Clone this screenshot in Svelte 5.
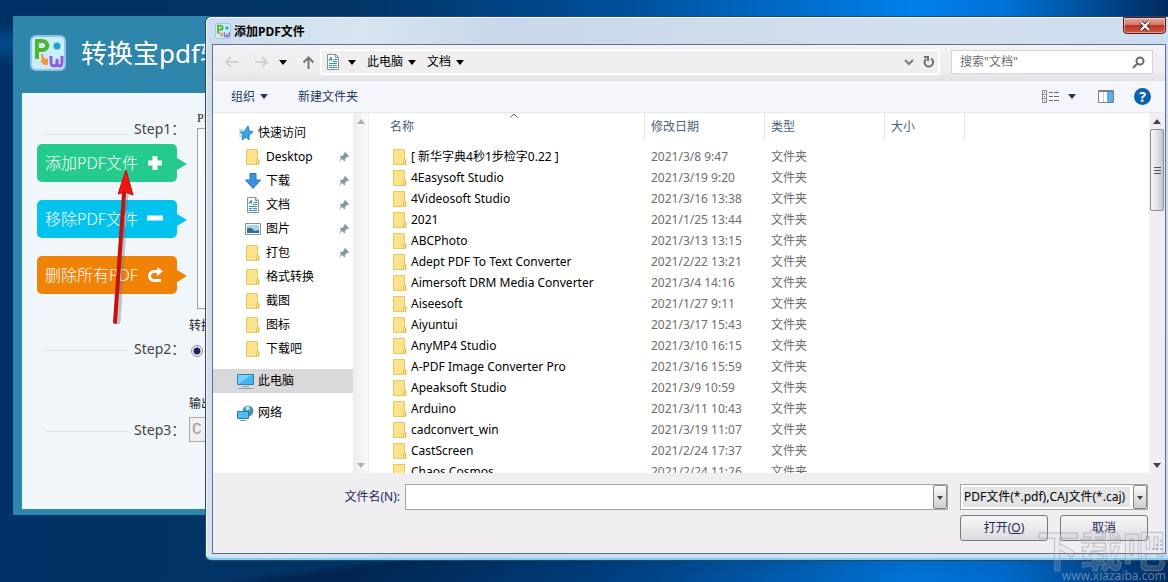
<script lang="ts">
  type Place = { name: string; icon: string; pinned?: boolean };

  const places: Place[] = [
    { name: 'Desktop', icon: 'folder', pinned: true },
    { name: '下载', icon: 'down', pinned: true },
    { name: '文档', icon: 'doc', pinned: true },
    { name: '图片', icon: 'picture', pinned: true },
    { name: '打包', icon: 'folder', pinned: true },
    { name: '格式转换', icon: 'folder' },
    { name: '截图', icon: 'folder' },
    { name: '图标', icon: 'folder' },
    { name: '下载吧', icon: 'folder' }
  ];

  const files = [
    ['[ 新华字典4秒1步检字0.22 ]', '2021/3/8 9:47'],
    ['4Easysoft Studio', '2021/3/19 9:20'],
    ['4Videosoft Studio', '2021/3/16 13:38'],
    ['2021', '2021/1/25 13:44'],
    ['ABCPhoto', '2021/3/13 13:15'],
    ['Adept PDF To Text Converter', '2021/2/22 13:21'],
    ['Aimersoft DRM Media Converter', '2021/3/4 14:16'],
    ['Aiseesoft', '2021/1/27 9:11'],
    ['Aiyuntui', '2021/3/17 15:43'],
    ['AnyMP4 Studio', '2021/3/10 16:15'],
    ['A-PDF Image Converter Pro', '2021/3/16 15:59'],
    ['Apeaksoft Studio', '2021/3/9 10:59'],
    ['Arduino', '2021/3/11 10:43'],
    ['cadconvert_win', '2021/3/19 11:07'],
    ['CastScreen', '2021/2/24 17:37'],
    ['Chaos Cosmos', '2021/2/24 11:26']
  ];

  let fileName = $state('');
  let query = $state('');
</script>

{#snippet folder()}
  <svg class="ico" width="14" height="16" viewBox="0 0 14 16">
    <path d="M.5.5h11v10h1.5v5H.5z" fill="#fde28c" stroke="#e6c667" />
    <path d="M10.5 15.5v-4l1-1 1 1v4" fill="#fbe9a8" stroke="#dfba4d" />
  </svg>
{/snippet}

{#snippet doc()}
  <svg class="ico" width="14" height="16" viewBox="0 0 14 16">
    <path d="M1.5.5h8l3 3v12h-11z" fill="#fff" stroke="#85929c" />
    <path d="M9.5.5v3h3" fill="none" stroke="#85929c" />
    <path d="M3 7l2-4 1 4M3 5.5h3M7.5 5.5h4M7 7.5h4M3 9.5h8M3 11.5h3M7 11.5h4M3 13.5h8" fill="none" stroke="#2f8fbf" />
  </svg>
{/snippet}

{#snippet caret()}
  <svg class="caret" width="8" height="5" viewBox="0 0 8 5"><path d="M0 0h8L4 5z" fill="currentColor" /></svg>
{/snippet}

{#snippet logo(size: number)}
  <svg class="ico" width={size} height={size} viewBox="0 0 36 36">
    <rect x="1" y="1" width="34" height="34" rx="5" fill="#c9edfb" stroke="#8fc5e2" stroke-width="2" />
    <path d="M7 24V6h5c7 0 7 9 0 9H9" fill="none" stroke="#4fb52c" stroke-width="4" />
    <circle cx="27" cy="11" r="3.5" fill="#16a5cf" />
    <path d="M11 19l2 0 1 4 4 1 0 6-4 0-4-4 2-1z" fill="#f2963e" />
    <path d="M21 21v6q0 4 3 4 3 0 3-4v-3 3q0 4 3 4 2 0 2-4v-6" fill="none" stroke="#8c62d8" stroke-width="3" />
  </svg>
{/snippet}

<main class="desktop">
  <section class="app">
    <header>
      {@render logo(36)}
      <h1>转换宝pdf转</h1>
    </header>
    <div class="app-body">
      <div class="steps">
        <div class="step"><i></i><span>Step1：</span></div>
        <button class="action add" type="button">
          添加PDF文件
          <svg width="16" height="16" viewBox="0 0 16 16"><path d="M8 1v14M1 8h14" stroke="#fff" stroke-width="5" /></svg>
        </button>
        <button class="action remove" type="button">
          移除PDF文件
          <svg width="16" height="16" viewBox="0 0 16 16"><path d="M0 7h16" stroke="#fff" stroke-width="5" /></svg>
        </button>
        <button class="action clear" type="button">
          删除所有PDF
          <svg width="16" height="16" viewBox="0 0 16 16">
            <path d="M14 13.5H7C1 13.500 1 4.500 7 4.500h4" fill="none" stroke="#fff" stroke-width="3" />
            <path d="M10 0l6 4.500-6 4.500z" fill="#fff" />
          </svg>
        </button>
        <div class="step second"><i></i><span>Step2：</span></div>
        <div class="step third"><i></i><span>Step3：</span></div>
      </div>
      <div class="settings">
        <p class="inset serif">PDF</p>
        <div class="queue"></div>
        <p>转换</p>
        <input type="radio" aria-label="转换" checked />
        <label for="output">输出</label>
        <input id="output" class="path" type="text" value="C:" />
      </div>
    </div>
    <svg class="pointer" width="30" height="160" viewBox="0 0 30 160">
      <path d="M7 153L15 24" stroke="#777" stroke-opacity=".4" stroke-width="5" stroke-linecap="round" />
      <path d="M4 153L13 24" stroke="#c5120f" stroke-width="4" stroke-linecap="round" />
      <path d="M15 1l7 25-8-3-7 2z" fill="#ee1512" stroke="#c0110e" />
    </svg>
  </section>

  <section class="dialog" aria-label="添加PDF文件">
    <div class="titlebar">
      {@render logo(16)}
      <h2>添加PDF文件</h2>
      <button class="close" type="button" aria-label="关闭">
        <svg width="12" height="10" viewBox="0 0 12 10">
          <path d="M2 1l8 8M10 1L2 9" stroke="#5a3030" stroke-width="4" />
          <path d="M2 1l8 8M10 1L2 9" stroke="#fff" stroke-width="2" />
        </svg>
      </button>
    </div>

    <div class="client">
      <div class="navbar">
        <div class="history">
          <button type="button" aria-label="后退">
            <svg width="13" height="12" viewBox="0 0 13 12"><path d="M6 1L1 6l5 5M1 6h12" fill="none" stroke="#d3d1d5" stroke-width="2" /></svg>
          </button>
          <button type="button" aria-label="前进">
            <svg width="13" height="12" viewBox="0 0 13 12"><path d="M7 1l5 5-5 5M12 6H0" fill="none" stroke="#d3d1d5" stroke-width="2" /></svg>
          </button>
          <button type="button" aria-label="最近位置">{@render caret()}</button>
          <button type="button" aria-label="上移">
            <svg width="13" height="13" viewBox="0 0 13 13"><path d="M1.5 6.5l5-5 5 5M6.5 1.5V13" fill="none" stroke="#777" stroke-width="2" /></svg>
          </button>
        </div>
        <div class="address">
          {@render doc()}
          <button class="crumb" type="button" aria-label="位置">{@render caret()}</button>
          <button class="crumb" type="button">此电脑 {@render caret()}</button>
          <button class="crumb" type="button">文档 {@render caret()}</button>
          <button class="tail" type="button" aria-label="展开">
            <svg width="10" height="7" viewBox="0 0 10 7"><path d="M1 1l4 4 4-4" fill="none" stroke="#7c7c80" stroke-width="2" /></svg>
          </button>
          <button type="button" aria-label="刷新">
            <svg width="12" height="12" viewBox="0 0 12 12">
              <path d="M8 2.5A4.3 4.300 0 1 1 3 3" fill="none" stroke="#707074" stroke-width="2" />
              <path d="M1 0h5v5H4V2H1z" fill="#707074" />
            </svg>
          </button>
        </div>
        <div class="search">
          <input type="text" placeholder={'搜索"文档"'} aria-label="搜索" bind:value={query} />
          <svg width="13" height="13" viewBox="0 0 13 13">
            <circle cx="8" cy="5" r="3.5" fill="none" stroke="#6a6a6e" stroke-width="2" />
            <path d="M5.5 7.5L1 12" stroke="#6a6a6e" stroke-width="2" />
          </svg>
        </div>
      </div>

      <div class="toolbar">
        <button type="button">组织 {@render caret()}</button>
        <button type="button">新建文件夹</button>
        <button class="view" type="button" aria-label="更改视图">
          <svg width="17" height="13" viewBox="0 0 17 13">
            <path d="M.5.5h4v12h-4zM.5 4.5h4M.5 8.5h4" fill="#fff" stroke="#858a92" />
            <path d="M2 2.5h1M2 6.5h1M2 10.5h1M7 2.5h4M12 2.5h5M7 6.5h4M12 6.5h5M7 10.5h4M12 10.5h5" stroke="#666b75" />
          </svg>
          {@render caret()}
        </button>
        <button type="button" aria-label="预览窗格">
          <svg width="16" height="13" viewBox="0 0 16 13">
            <path d="M.5.5h15v12H.5z" fill="#fff" stroke="#77818c" />
            <path d="M1 1.5h14" stroke="#77818c" />
            <path d="M9 2h6v10H9z" fill="#5caee6" />
            <path d="M5.5 2v10" stroke="#c5ccd3" />
          </svg>
        </button>
        <button class="help" type="button" aria-label="帮助">?</button>
      </div>

      <div class="browser">
        <nav>
          <a href="#quick" class="root">
            <svg class="ico" width="14" height="14" viewBox="0 0 14 14">
              <path d="M9 0l1 5 4 1-4 3v5L7 11l-4 3 1-5-3-3h4z" fill="#37a5e4" stroke="#2581bd" />
              <path d="M0 4h4M0 7h3M0 10h3" stroke="#58b7ea" />
            </svg>
            快速访问
          </a>
          {#each places as place}
            <a href="#place">
              <span class="slot">
                {#if place.icon === 'folder'}
                  {@render folder()}
                {:else if place.icon === 'doc'}
                  {@render doc()}
                {:else if place.icon === 'down'}
                  <svg class="ico" width="16" height="16" viewBox="0 0 16 16"><path d="M5 .5h6V7h4.5L8 15.5.5 7H5z" fill="#3b93e0" stroke="#2877bd" /></svg>
                {:else}
                  <svg class="ico" width="16" height="12" viewBox="0 0 16 12">
                    <path d="M.5.5h15v11H.5z" fill="#fff" stroke="#84909b" />
                    <path d="M2 2h12v8H2z" fill="#a4d3ee" />
                    <path d="M2 5l4 0 4 3 4-1v3H2z" fill="#396c86" />
                  </svg>
                {/if}
              </span>
              {place.name}
              {#if place.pinned}
                <svg class="pin" width="10" height="10" viewBox="0 0 10 10">
                  <path d="M6 0l4 4-1 1H8L6 7v2H5L3 7 0 10l2-4-1-1V4h2l2-2V1z" fill="#8b979f" />
                </svg>
              {/if}
            </a>
          {/each}
          <a href="#pc" class="root gap selected">
            <svg class="ico" width="17" height="16" viewBox="0 0 17 16">
              <path d="M.5 1.5h16v10H.5z" fill="#46b4f5" stroke="#327fae" />
              <path d="M1 11L15 2H1z" fill="#7bd0fc" />
              <path d="M5 13.5h7M1 15.5h15" stroke="#85a0b3" />
            </svg>
            此电脑
          </a>
          <a href="#net" class="root later">
            <svg class="ico" width="17" height="16" viewBox="0 0 17 16">
              <circle cx="11" cy="6" r="5.5" fill="#4d93b9" />
              <path d="M8 2l4-1 1 3-3 2z" fill="#bce2ee" />
              <path d="M.5 6.5h11v7H.5z" fill="#51bdf3" stroke="#2b78a8" />
              <path d="M3 15.5h6" stroke="#7898ab" />
            </svg>
            网络
          </a>
        </nav>
        <div class="scroll left">
          <svg width="8" height="5" viewBox="0 0 8 5"><path d="M0 5h8L4 0z" fill="#b0b0b4" /></svg>
          <svg width="8" height="5" viewBox="0 0 8 5"><path d="M0 0h8L4 5z" fill="#b0b0b4" /></svg>
        </div>
        <div class="list">
          <table>
            <thead>
              <tr>
                <th class="name">名称 <svg class="sort" width="8" height="5" viewBox="0 0 8 5"><path d="M.5 4.5L4 1l3.5 3.5" fill="none" stroke="#666" /></svg></th>
                <th class="date">修改日期</th>
                <th class="kind">类型</th>
                <th class="size">大小</th>
                <th class="rest" aria-label="空"></th>
              </tr>
            </thead>
            <tbody>
              {#each files as [name, date]}
                <tr>
                  <td><span class="file">{@render folder()}{name}</span></td>
                  <td>{date}</td>
                  <td>文件夹</td>
                  <td></td>
                  <td></td>
                </tr>
              {/each}
            </tbody>
          </table>
        </div>
        <div class="scroll right">
          <svg width="8" height="5" viewBox="0 0 8 5"><path d="M0 5h8L4 0z" fill="#444" /></svg>
          <div class="thumb"><i></i><i></i><i></i></div>
          <svg width="8" height="5" viewBox="0 0 8 5"><path d="M0 0h8L4 5z" fill="#444" /></svg>
        </div>
      </div>

      <div class="footer">
        <div class="line">
          <label for="file-name">文件名(N):</label>
          <div class="combo">
            <input id="file-name" type="text" bind:value={fileName} />
            <button class="drop" type="button" aria-label="历史"></button>
          </div>
          <div class="combo filter">
            <select aria-label="文件类型">
              <option>PDF文件(*.pdf),CAJ文件(*.caj)</option>
            </select>
            <span class="drop"></span>
          </div>
        </div>
        <div class="line buttons">
          <button type="button">打开(<u>O</u>)</button>
          <button type="button">取消</button>
        </div>
        <svg class="grip" width="12" height="12" viewBox="0 0 12 12">
          <path d="M9 1h2v2H9zM5 5h2v2H5zM9 5h2v2H9zM1 9h2v2H1zM5 9h2v2H5zM9 9h2v2H9z" fill="#b5b4bb" />
        </svg>
      </div>
    </div>
  </section>

  <div class="watermark">
    <strong>下载吧</strong>
    <span>www.xiazaiba.com</span>
  </div>
</main>

<style>
  :global(body) {
    margin: 0;
  }
  .desktop {
    position: relative;
    min-height: 100vh;
    overflow: hidden;
    font: 12px/16px 'Noto Sans', 'Noto Sans CJK SC', sans-serif;
    color: #000;
    background:
      radial-gradient(ellipse 90px 20px at 0 44px, rgba(0, 100, 180, 0.5), transparent),
      linear-gradient(172deg, transparent 82%, rgba(0, 10, 40, 0.35) 83%, transparent),
      linear-gradient(90deg, #013267 0%, #013465 30%, #00509c 54%, #0080ea 78%, #0072d8 86%, #003a78 97%, #002c60);
  }
  .desktop * {
    box-sizing: border-box;
  }
  button,
  input,
  select {
    font: inherit;
    color: inherit;
    margin: 0;
    padding: 0;
    border: 0;
    background: none;
  }
  button {
    display: flex;
    align-items: center;
    cursor: pointer;
  }
  h1,
  h2,
  p {
    margin: 0;
  }
  svg {
    flex: none;
    display: block;
  }

  /* converter window */
  .app {
    position: absolute;
    left: 13px;
    top: 16px;
    bottom: 67px;
    width: 50%;
    display: flex;
    flex-direction: column;
    padding: 0 9px 6px;
    background: #2f86ac;
  }
  .app header {
    display: flex;
    align-items: center;
    gap: 15px;
    height: 77px;
    padding: 0 0 4px 8px;
  }
  h1 {
    font-size: 26px;
    line-height: 36px;
    font-weight: 400;
    color: #fff;
  }
  .app-body {
    flex: 1;
    display: flex;
    gap: 8px;
    padding-left: 15px;
    background: #f0f6f9;
  }
  .steps {
    width: 144px;
    padding-top: 26px;
  }
  .step {
    display: flex;
    align-items: center;
    gap: 6px;
    height: 20px;
    margin-bottom: 5px;
    padding-left: 8px;
    font-size: 14px;
    line-height: 20px;
    color: #444;
    white-space: nowrap;
  }
  .step i {
    flex: none;
    width: 83px;
    height: 1px;
    margin-top: 10px;
    background: #dbe2e6;
  }
  .step.second {
    margin: 45px 0 61px;
  }
  .step.second i,
  .step.third i {
    margin-top: 3px;
  }
  .action {
    position: relative;
    width: 140px;
    height: 38px;
    margin-bottom: 18px;
    padding: 0 14px 0 8px;
    justify-content: space-between;
    border-radius: 5px;
    font-size: 16px;
    font-weight: 300;
    color: #fff;
    white-space: nowrap;
    background: var(--tone);
  }
  .action::after {
    content: '';
    position: absolute;
    left: 100%;
    top: 14px;
    border: 6px solid transparent;
    border-left: 10px solid var(--tone);
    border-right: 0;
  }
  .add {
    --tone: #25cb8d;
  }
  .remove {
    --tone: #02c2ee;
  }
  .clear {
    --tone: #f08307;
  }
  .settings {
    flex: 1;
    display: flex;
    flex-direction: column;
    align-items: flex-start;
    padding-top: 17px;
    color: #222;
  }
  .inset {
    padding-left: 8px;
  }
  .serif {
    font-family: 'Liberation Serif', serif;
  }
  .queue {
    width: 100%;
    height: 181px;
    margin: 2px 0 9px 8px;
    border: 1px solid #9aa3ab;
    background: #f7fafc;
  }
  .settings input[type='radio'] {
    appearance: none;
    width: 12px;
    height: 12px;
    margin: 11px 0 39px 2px;
    border: 1px solid #8c8c94;
    border-radius: 50%;
    background: radial-gradient(circle, #20205c 3px, #f2f2f6 4px);
  }
  .settings .path {
    width: 180px;
    height: 25px;
    margin-top: 5px;
    padding-left: 2px;
    border: 1px solid #a8aaae;
    font: 16px/22px 'Liberation Mono', monospace;
    color: #999;
    background: #f0eef1;
  }
  .pointer {
    position: absolute;
    left: 98px;
    top: 153px;
  }

  /* file dialog */
  .dialog {
    position: absolute;
    left: 205px;
    right: 0;
    top: 16px;
    bottom: 21px;
    display: flex;
    flex-direction: column;
    padding: 0 2px 6px 6px;
    border: 1px solid #26466b;
    border-right: 0;
    border-radius: 6px 0 0 6px;
    background: linear-gradient(100deg, #cddcec, #d8e4f0 15%, #c8d7e9 28%, #d3e0ee 70%, #c9dcf0);
    box-shadow: inset 1px 1px #f4f9fd, inset 0 -2px #83cdf3;
  }
  .titlebar {
    display: flex;
    align-items: center;
    gap: 3px;
    height: 27px;
    padding-left: 3px;
  }
  h2 {
    padding-top: 2px;
    font-size: 12px;
    line-height: 16px;
    font-weight: 700;
  }
  .close {
    align-self: flex-start;
    width: 43px;
    height: 17px;
    margin-left: auto;
    justify-content: center;
    border: 1px solid #4c2026;
    border-radius: 0 0 4px 4px;
    background: linear-gradient(#e6a79c, #d4776a 45%, #b83420 50%, #cf5a45);
    box-shadow: inset 0 0 0 1px rgba(255, 255, 255, 0.4);
  }
  .client {
    flex: 1;
    min-height: 0;
    display: flex;
    flex-direction: column;
    border: 1px solid #5c7090;
    background: #f0eef1;
  }
  .navbar {
    display: flex;
    align-items: center;
    height: 36px;
    padding: 0 12px 2px;
    background: linear-gradient(#f3f1f4, #efedf0 70%, #e4e2e6);
  }
  .history {
    display: flex;
    align-items: center;
    gap: 17px;
    width: 95px;
  }
  .history button:nth-child(3) {
    margin-left: -6px;
  }
  .history button:nth-child(4) {
    margin-left: -2px;
  }
  .address {
    flex: 1;
    display: flex;
    align-items: center;
    height: 26px;
    padding: 0 3px 0 4px;
    border: 2px solid #fff;
    background: #f0eef1;
  }
  .crumb {
    gap: 5px;
    margin-left: 11px;
  }
  .crumb:nth-of-type(1) {
    margin-left: 8px;
  }
  .tail {
    margin: 0 9px 0 auto;
  }
  .search {
    display: flex;
    align-items: center;
    width: 202px;
    height: 24px;
    margin-left: 11px;
    padding: 0 7px 0 8px;
    border: 1px solid #d5d5d9;
    background: #fff;
  }
  .search input {
    flex: 1;
    min-width: 0;
    outline: 0;
  }
  .search input::placeholder {
    color: #6d6d70;
    opacity: 1;
  }
  .toolbar {
    display: flex;
    align-items: center;
    gap: 22px;
    height: 32px;
    padding: 0 14px 0 18px;
    color: #1e395b;
    background: #f4f6fb;
    border-bottom: 1px solid #e6e7ec;
  }
  .toolbar button {
    gap: 5px;
  }
  .toolbar button:nth-child(2) {
    margin-left: 8px;
  }
  .toolbar .view {
    gap: 9px;
    margin-left: auto;
  }
  .toolbar .help {
    width: 17px;
    height: 17px;
    margin-left: -2px;
    justify-content: center;
    border-radius: 50%;
    font-weight: 700;
    font-size: 14px;
    color: #fff;
    background: #0a62ad;
  }
  .browser {
    flex: 1;
    min-height: 0;
    display: flex;
    overflow: hidden;
    background: #fff;
  }
  nav {
    width: 140px;
    flex: none;
    padding-top: 8px;
  }
  nav a {
    display: flex;
    align-items: center;
    gap: 5px;
    height: 24px;
    padding: 0 4px 0 32px;
    color: #000;
    text-decoration: none;
    white-space: nowrap;
  }
  nav .root {
    padding-left: 24px;
    gap: 4px;
  }
  nav .root:first-child {
    padding-left: 26px;
    gap: 5px;
  }
  .gap,
  .later {
    margin-top: 8px;
  }
  nav .selected {
    background: #d9d8da;
  }
  .slot {
    width: 16px;
    display: flex;
    justify-content: center;
  }
  .pin {
    margin-left: auto;
  }
  .scroll {
    flex: none;
    width: 16px;
    display: flex;
    flex-direction: column;
    align-items: center;
    justify-content: space-between;
    padding: 6px 0 5px;
    background: #f0eef2;
  }
  .scroll.left {
    background: linear-gradient(90deg, #ececee, #fbfbfc);
    border-right: 1px solid #eee;
  }
  .scroll.right {
    justify-content: flex-start;
  }
  .scroll.right svg:last-child {
    margin-top: auto;
  }
  .thumb {
    width: 14px;
    height: 82px;
    margin-top: 5px;
    display: flex;
    flex-direction: column;
    align-items: center;
    justify-content: center;
    gap: 2px;
    border: 1px solid #8d8d93;
    border-radius: 2px;
    background: linear-gradient(90deg, #f7f7f8, #e5e5e8 45%, #c6c6cb);
  }
  .thumb i {
    width: 7px;
    height: 1px;
    background: #555;
  }
  .list {
    flex: 1;
    min-width: 0;
    overflow: hidden;
  }
  table {
    width: 100%;
    table-layout: fixed;
    border-collapse: separate;
    border-spacing: 0;
  }
  th {
    position: relative;
    height: 27px;
    padding: 0 0 0 6px;
    text-align: left;
    font-weight: 400;
    color: #4c607a;
    border-right: 1px solid #e3e5e8;
  }
  thead::after {
    content: '';
    display: block;
    height: 6px;
  }
  .name {
    width: 276px;
    padding-left: 21px;
  }
  .date,
  .kind {
    width: 120px;
  }
  .size {
    width: 80px;
  }
  .rest {
    border-right: 0;
  }
  .sort {
    position: absolute;
    left: 141px;
    top: 0;
  }
  td {
    height: 21px;
    padding: 0 0 0 6px;
    color: #6d6d6d;
    white-space: nowrap;
  }
  td:first-child {
    padding-left: 24px;
    color: #000;
  }
  .file {
    display: flex;
    align-items: center;
    gap: 4px;
  }
  .footer {
    position: relative;
    height: 80px;
    padding: 11px 17px 0 0;
    color: #1f2a55;
  }
  .grip {
    position: absolute;
    right: 2px;
    bottom: 2px;
  }
  .line {
    display: flex;
    align-items: center;
  }
  .line label {
    width: 187px;
    margin-right: 5px;
    text-align: right;
  }
  .combo {
    position: relative;
    flex: 1;
    display: flex;
    height: 26px;
    border: 1px solid #a5a5ab;
    background: #fff;
    color: #000;
  }
  .combo input {
    flex: 1;
    padding: 0 5px;
    outline: 0;
  }
  .filter {
    flex: none;
    width: 188px;
    margin-left: 12px;
    padding: 2px 0 2px 2px;
  }
  .filter select {
    width: 167px;
    flex: none;
    appearance: none;
    padding-left: 1px;
    background: #e5e4e6;
  }
  .drop {
    position: relative;
    width: 14px;
    flex: none;
    margin-left: auto;
    border: 1px solid #85858c;
    border-radius: 2px;
    background: linear-gradient(#fafafa, #cfcfd3);
    pointer-events: none;
  }
  .filter .drop {
    margin: -2px 0 -2px auto;
  }
  .drop::after {
    content: '';
    position: absolute;
    left: 3px;
    top: 10px;
    border: 3px solid transparent;
    border-top: 4px solid #444;
    border-bottom: 0;
  }
  .buttons {
    justify-content: flex-end;
    gap: 12px;
    margin-top: 5px;
  }
  .buttons button {
    width: 88px;
    height: 26px;
    justify-content: center;
    border: 1px solid #77777d;
    border-radius: 3px;
    background: linear-gradient(#f6f5f7, #eae9ec 50%, #dcdbdf);
  }

  .watermark {
    position: absolute;
    right: 2px;
    bottom: 0;
    display: flex;
    flex-direction: column;
    align-items: center;
    width: 130px;
    pointer-events: none;
  }
  .watermark strong {
    font: 700 43px/44px 'Noto Sans CJK SC', sans-serif;
    color: rgba(210, 214, 222, 0.2);
    -webkit-text-stroke: 1px rgba(140, 146, 158, 0.5);
    white-space: nowrap;
  }
  .watermark span {
    align-self: flex-end;
    font-size: 12px;
    line-height: 12px;
    color: rgba(140, 160, 185, 0.7);
  }
</style>
